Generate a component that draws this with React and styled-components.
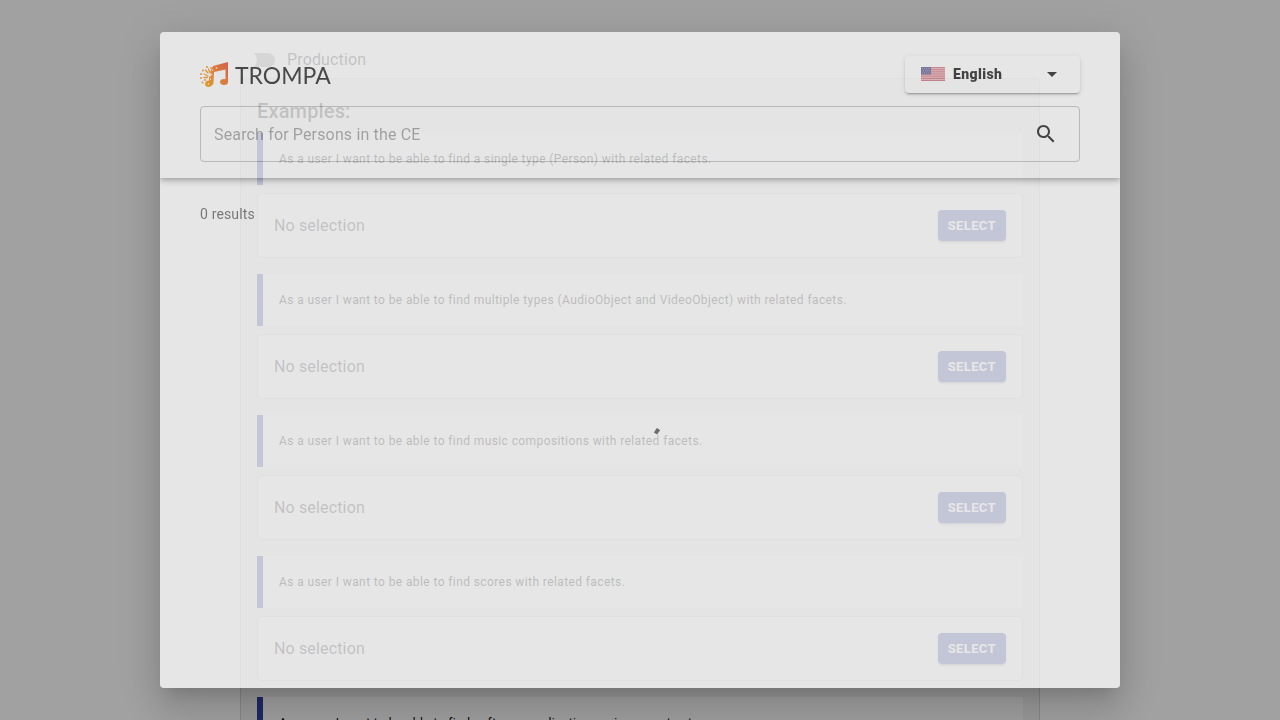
import React from "react";
import styled, { createGlobalStyle } from "styled-components";

const GlobalStyle = createGlobalStyle`
  *, *::before, *::after { box-sizing: border-box; }
  body {
    margin: 0;
    overflow: hidden;
    background: #fafafa;
    color: rgba(0, 0, 0, 0.87);
    font-family: Roboto, "Liberation Sans", sans-serif;
    -webkit-font-smoothing: antialiased;
  }
`;

const Page = styled.main`
  max-width: 800px;
  margin: 0 auto;
  padding: 40px 0;
`;

const SwitchLabel = styled.label`
  display: flex;
  align-items: center;
  gap: 12px;
  height: 38px;
  padding-top: 2px;
  font-size: 16px;
  line-height: 24px;
  letter-spacing: 0.00938em;
`;

const Switch = styled.input`
  appearance: none;
  position: relative;
  width: 35px;
  height: 14px;
  margin: 0;
  border-radius: 7px;
  background: rgba(0, 0, 0, 0.38);

  &::before {
    content: "";
    position: absolute;
    top: -3px;
    left: -3px;
    width: 20px;
    height: 20px;
    border-radius: 50%;
    background: #fafafa;
    box-shadow: 0 1px 3px rgba(0, 0, 0, 0.2);
  }
`;

const Panel = styled.section`
  padding: 16px;
  border: 1px solid #d4d4d4;
  border-radius: 4px;
  background: #eee;
`;

const PanelTitle = styled.h2`
  margin: 0 0 6px;
  font-size: 20px;
  font-weight: 500;
  line-height: 32px;
  letter-spacing: 0.0075em;
`;

const Example = styled.article`
  display: flex;
  flex-direction: column;
  gap: 8px;
  margin-bottom: 16px;
`;

const Story = styled.blockquote`
  margin: 0;
  padding: 16px;
  border-left: 6px solid #303f9f;
  background: #f9f9f9;
  color: #000;
  font-size: 12px;
  line-height: 20px;
  letter-spacing: 0.03333em;
`;

const SelectionCard = styled.div`
  display: flex;
  align-items: center;
  justify-content: space-between;
  padding: 16px;
  border: 1px solid #d0d0d0;
  border-radius: 4px;
  background: #fafafa;
  font-size: 16px;
  line-height: 24px;
  letter-spacing: 0.00938em;
`;

const SelectButton = styled.button`
  height: 31px;
  padding: 0 10px;
  border: 0;
  border-radius: 4px;
  background: #303f9f;
  color: #fff;
  font-family: inherit;
  font-size: 13px;
  font-weight: 700;
  letter-spacing: 0.02857em;
  text-transform: uppercase;
  box-shadow: 0 3px 1px -2px rgba(0, 0, 0, 0.2),
    0 2px 2px 0 rgba(0, 0, 0, 0.14), 0 1px 5px 0 rgba(0, 0, 0, 0.12);
`;

const Backdrop = styled.div`
  position: fixed;
  inset: 0;
  display: flex;
  justify-content: center;
  padding: 32px;
  background: rgba(0, 0, 0, 0.355);
`;

const Dialog = styled.div`
  display: flex;
  flex-direction: column;
  width: 100%;
  max-width: 960px;
  overflow: hidden;
  border-radius: 4px;
  background: #fff;
  opacity: 0.735;
  box-shadow: 0 11px 15px -7px rgba(0, 0, 0, 0.2),
    0 24px 38px 3px rgba(0, 0, 0, 0.14), 0 9px 46px 8px rgba(0, 0, 0, 0.12);
`;

const DialogHeader = styled.header`
  display: flex;
  flex-direction: column;
  gap: 13px;
  padding: 24px 40px 16px;
  box-shadow: 0 2px 4px -1px rgba(0, 0, 0, 0.2),
    0 4px 5px 0 rgba(0, 0, 0, 0.14), 0 1px 10px 0 rgba(0, 0, 0, 0.12);
`;

const TopRow = styled.div`
  display: flex;
  align-items: center;
  justify-content: space-between;
`;

const Brand = styled.div`
  display: flex;
  align-items: center;
  gap: 6px;
  color: #2a2a2a;
  font-family: Lato, sans-serif;
  font-size: 23px;
  line-height: 24px;
`;

const LanguagePicker = styled.label`
  display: flex;
  align-items: center;
  gap: 8px;
  width: 175px;
  height: 37px;
  padding: 0 16px 1px;
  border-radius: 4px;
  box-shadow: 0 3px 1px -2px rgba(0, 0, 0, 0.2),
    0 2px 2px 0 rgba(0, 0, 0, 0.14), 0 1px 5px 0 rgba(0, 0, 0, 0.12);
  background: #fff;
`;

const LanguageSelect = styled.select`
  appearance: none;
  flex: 1;
  min-width: 0;
  padding: 0;
  border: 0;
  background: none;
  color: rgba(0, 0, 0, 0.87);
  font-family: inherit;
  font-size: 14px;
  font-weight: 900;
  letter-spacing: 0.02857em;
`;

const SearchBox = styled.div`
  display: flex;
  align-items: center;
  height: 56px;
  padding: 0 21px 0 13px;
  border: 1px solid rgba(0, 0, 0, 0.24);
  border-radius: 4px;
`;

const SearchInput = styled.input`
  flex: 1;
  min-width: 0;
  padding: 0;
  border: 0;
  outline: 0;
  background: none;
  font-family: inherit;
  font-size: 16px;
  letter-spacing: 0.00938em;

  &::placeholder {
    color: rgba(0, 0, 0, 0.38);
    opacity: 1;
  }
`;

const IconButton = styled.button`
  display: flex;
  padding: 0;
  border: 0;
  background: none;
  color: #000;
`;

const Results = styled.div`
  display: flex;
  flex: 1;
  flex-direction: column;
  padding: 26px 40px;
`;

const ResultCount = styled.p`
  margin: 0;
  color: rgba(0, 0, 0, 0.6);
  font-size: 14px;
  line-height: 20px;
  letter-spacing: 0.01071em;
`;

const SpinnerArea = styled.div`
  display: flex;
  flex: 1;
  align-items: center;
  justify-content: center;
  padding-bottom: 36px;
`;

const examples = [
  "As a user I want to be able to find a single type (Person) with related facets.",
  "As a user I want to be able to find multiple types (AudioObject and VideoObject) with related facets.",
  "As a user I want to be able to find music compositions with related facets.",
  "As a user I want to be able to find scores with related facets.",
  "As a user I want to be able to find software applications using preset category.",
];

function BrandMark() {
  return (
    <svg width="29" height="26" viewBox="0 0 29 26" aria-hidden="true">
      <defs>
        <linearGradient id="brand" gradientUnits="userSpaceOnUse" x1="4" y1="22" x2="27" y2="4">
          <stop offset="0" stopColor="#f59a00" />
          <stop offset="0.45" stopColor="#f07c18" />
          <stop offset="1" stopColor="#e8502a" />
        </linearGradient>
      </defs>
      <g fill="url(#brand)">
        <path d="M13 4 L28 0 V20 H25.500 V7.500 L14 10 L13.500 21 C12 26 5 26 5 22 C5 19.500 7 18.500 9 18.500 V15 L11 14 L10 10 Z" />
        <ellipse cx="24" cy="20" rx="4" ry="3" />
      </g>
      <g fill="#f3911a">
        <circle cx="7" cy="5" r="1" />
        <circle cx="11" cy="6" r="1" />
        <circle cx="3" cy="8.500" r="1" />
        <circle cx="1" cy="12" r="1" />
        <circle cx="1" cy="16" r="1" />
        <circle cx="2.500" cy="20.500" r="1" />
        <circle cx="5" cy="18" r="1" />
      </g>
      <path
        d="M5.500 8 L8 11 M8.500 7 L9.500 10 M4 12 L8 14 M4 15.500 L7.500 15.500"
        stroke="#f3911a"
        strokeWidth="1.300"
        strokeLinecap="round"
      />
      <g fill="#fff">
        <circle cx="16.500" cy="6" r="0.800" />
        <circle cx="12.500" cy="8" r="0.700" />
        <circle cx="10.500" cy="17" r="0.700" />
        <circle cx="8.500" cy="22" r="0.700" />
        <circle cx="11.500" cy="12.500" r="0.700" />
      </g>
    </svg>
  );
}

function Flag() {
  return (
    <svg width="24" height="14" viewBox="0 0 24 13" preserveAspectRatio="none" opacity="0.7" aria-hidden="true">
      <rect width="24" height="13" fill="#e6a4ac" />
      {[0, 2, 4, 6, 8, 10, 12].map((y) => (
        <rect key={y} y={y} width="24" height="1" fill="#c04352" />
      ))}
      <rect width="10" height="7" fill="#2a2970" />
      {[1, 3, 5].map((y) =>
        [1, 3, 5, 7].map((x) => (
          <rect key={`${x}-${y}`} x={x + (y === 3 ? 1 : 0)} y={y} width="1" height="1" fill="#6a6898" />
        ))
      )}
    </svg>
  );
}

export default function App() {
  return (
    <>
      <GlobalStyle />
      <Page>
        <SwitchLabel>
          <Switch type="checkbox" role="switch" />
          Production
        </SwitchLabel>
        <Panel>
          <PanelTitle>Examples:</PanelTitle>
          {examples.map((story) => (
            <Example key={story}>
              <Story>{story}</Story>
              <SelectionCard>
                <span>No selection</span>
                <SelectButton type="button">Select</SelectButton>
              </SelectionCard>
            </Example>
          ))}
        </Panel>
      </Page>
      <Backdrop>
        <Dialog role="dialog" aria-modal="true" aria-label="Search">
          <DialogHeader>
            <TopRow>
              <Brand>
                <BrandMark />
                TROMPA
              </Brand>
              <LanguagePicker>
                <Flag />
                <LanguageSelect aria-label="Language" defaultValue="en">
                  <option value="en">English</option>
                </LanguageSelect>
                <svg width="24" height="24" viewBox="0 0 24 24" aria-hidden="true">
                  <path d="M7 10l5 5 5-5z" fill="#000" fillOpacity="0.87" />
                </svg>
              </LanguagePicker>
            </TopRow>
            <SearchBox>
              <SearchInput type="text" aria-label="Search" placeholder="Search for Persons in the CE" />
              <IconButton type="button" aria-label="Search">
                <svg width="24" height="24" viewBox="0 0 24 24" aria-hidden="true">
                  <path
                    fill="currentColor"
                    fillOpacity="0.87"
                    d="M15.500 14h-.79l-.28-.27C15.410 12.590 16 11.110 16 9.500 16 5.910 13.090 3 9.500 3S3 5.910 3 9.500 5.910 16 9.500 16c1.610 0 3.090-.59 4.230-1.570l.27.28v.79l5 4.990L20.490 19l-4.990-5zm-6 0C7.010 14 5 11.990 5 9.500S7.010 5 9.500 5 14 7.010 14 9.500 11.990 14 9.500 14z"
                  />
                </svg>
              </IconButton>
            </SearchBox>
          </DialogHeader>
          <Results>
            <ResultCount>0 results</ResultCount>
            <SpinnerArea>
              <svg width="40" height="40" viewBox="0 0 40 40" role="progressbar" aria-label="Loading">
                <path d="M35.500 28.500 L38.500 24" stroke="#5c5c5c" strokeWidth="4" fill="none" />
              </svg>
            </SpinnerArea>
          </Results>
        </Dialog>
      </Backdrop>
    </>
  );
}
